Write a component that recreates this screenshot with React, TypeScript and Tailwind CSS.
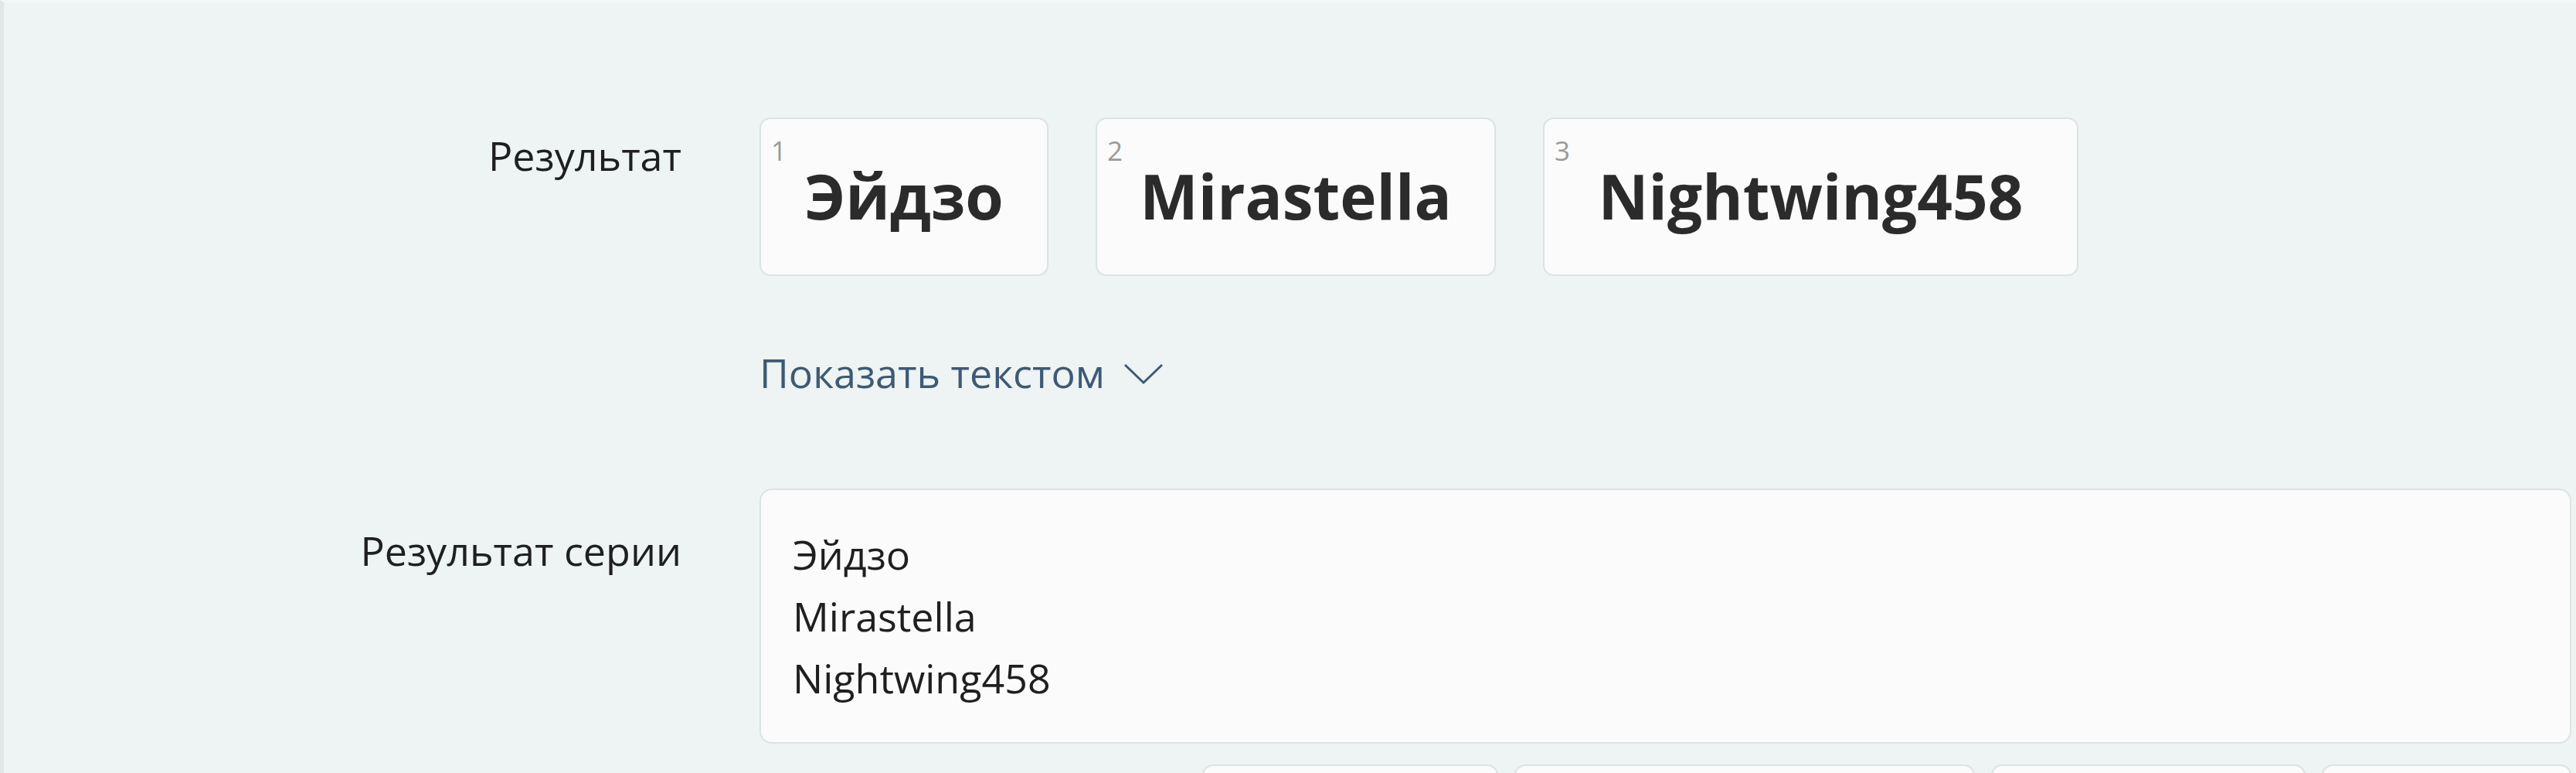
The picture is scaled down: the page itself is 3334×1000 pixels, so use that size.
import React from "react";

const PLACES = [
  { n: 1, name: "Эйдзо", w: "w-[374px]" },
  { n: 2, name: "Mirastella", w: "w-[518px]" },
  { n: 3, name: "Nightwing458", w: "w-[693px]" },
];

const SERIES = ["Эйдзо", "Mirastella", "Nightwing458"];

function PlaceCard({ n, name, w }: { n: number; name: string; w: string }) {
  return (
    <div
      className={`relative ${w} h-[205px] rounded-[14px] border-2 border-[#dce3e3] bg-[#fbfbfb] flex items-start justify-center pt-[58px]`}
    >
      <span className="absolute left-[13px] top-[23px] text-[35px] leading-none text-[#9a9a9a]">{n}</span>
      <span className="text-[80px] leading-[82px] font-bold text-[#2b2b2b]">{name}</span>
    </div>
  );
}

export default function App() {
  return (
    <div
      className="min-h-[1000px] w-[3334px] overflow-hidden bg-[#eef3f3] border-l-[5px] border-l-[#e1e7e7] border-t-[3px] border-t-[#f5f8f8] pt-[149px] pr-[6px]"
      style={{ fontFamily: '"Open Sans", "Noto Sans", sans-serif' }}
    >
      {/* Результат */}
      <div className="flex gap-[101px]">
        <div className="w-[877px] shrink-0 pt-[8px] text-right text-[52px] leading-[81px] text-[#1f1f1f]">
          Результат
        </div>
        <div className="flex-1 flex flex-col">
          <div className="flex gap-[61px]">
            {PLACES.map((p) => (
              <PlaceCard key={p.n} {...p} />
            ))}
          </div>
          <button className="mt-[84px] flex items-center gap-[24px] self-start text-[52px] leading-[81px] text-[#3d5a75]">
            Показать текстом
            <svg width="52" height="28" viewBox="0 0 52 28" fill="none" className="mt-[4px]">
              <path d="M2 2 L26 25 L50 2" stroke="#3d5a75" strokeWidth="3" />
            </svg>
          </button>
        </div>
      </div>

      {/* Результат серии */}
      <div className="mt-[110px] flex gap-[101px]">
        <div className="w-[877px] shrink-0 pt-[39px] text-right text-[52px] leading-[81px] text-[#1f1f1f]">
          Результат серии
        </div>
        <div className="flex-1 rounded-[16px] border-2 border-[#dce3e3] bg-[#fbfbfb] pl-[41px] pt-[43px] pb-[43px] text-[52px] leading-[80px] text-[#1f1f1f]">
          {SERIES.map((s) => (
            <div key={s}>{s}</div>
          ))}
        </div>
      </div>

      {/* нижняя панель */}
      <div className="mt-[27px] flex justify-end gap-[21px]">
        <div className="w-[383px] h-[90px] rounded-[14px] border-2 border-[#dce3e3] bg-[#fbfbfb]" />
        <div className="w-[596px] h-[90px] rounded-[14px] border-2 border-[#dce3e3] bg-[#fbfbfb]" />
        <div className="w-[407px] h-[90px] rounded-[14px] border-2 border-[#dce3e3] bg-[#fbfbfb]" />
        <div className="w-[323px] h-[90px] rounded-[14px] border-2 border-[#dce3e3] bg-[#fbfbfb]" />
      </div>
    </div>
  );
}
